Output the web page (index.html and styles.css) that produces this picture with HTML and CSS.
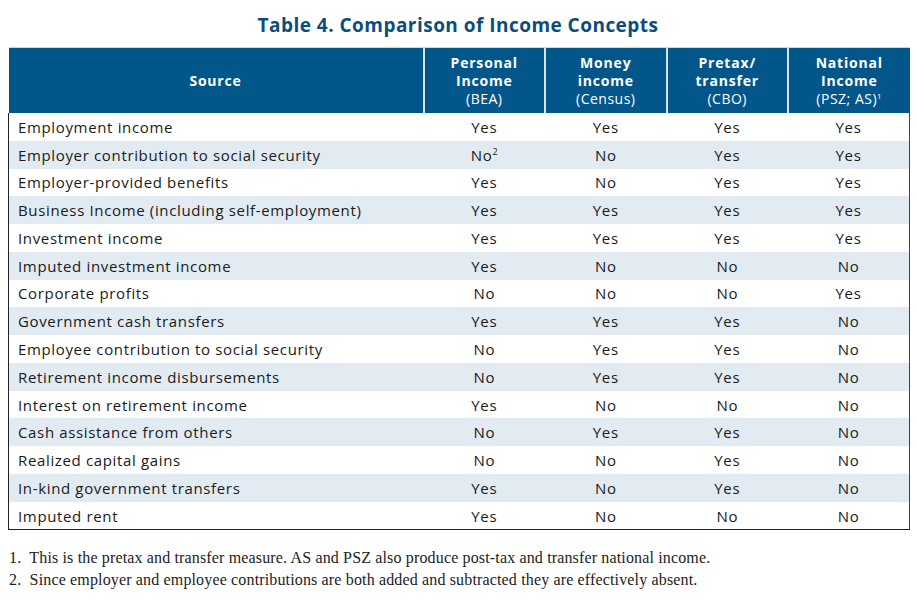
FILE: index.html
```html
<!DOCTYPE html>
<html>
<head>
<meta charset="utf-8">
<link rel="stylesheet" href="styles.css">
</head>
<body>
<h1 class="title">Table 4. Comparison of Income Concepts</h1>
<table class="tbl">
<colgroup><col class="c-src"><col class="c-val"><col class="c-val"><col class="c-val"><col class="c-val"></colgroup>
<thead>
<tr>
<th class="h-src">Source</th>
<th><b>Personal<br>Income</b><br><span class="sub">(BEA)</span></th>
<th><b>Money<br>income</b><br><span class="sub">(Census)</span></th>
<th><b>Pretax/<br>transfer</b><br><span class="sub">(CBO)</span></th>
<th class="last"><b>National<br>Income</b><br><span class="sub">(PSZ; AS)<sup>1</sup></span></th>
</tr>
</thead>
<tbody>
<tr><td>Employment income</td><td>Yes</td><td>Yes</td><td>Yes</td><td>Yes</td></tr>
<tr><td>Employer contribution to social security</td><td>No<sup>2</sup></td><td>No</td><td>Yes</td><td>Yes</td></tr>
<tr><td>Employer-provided benefits</td><td>Yes</td><td>No</td><td>Yes</td><td>Yes</td></tr>
<tr><td>Business Income (including self-employment)</td><td>Yes</td><td>Yes</td><td>Yes</td><td>Yes</td></tr>
<tr><td>Investment income</td><td>Yes</td><td>Yes</td><td>Yes</td><td>Yes</td></tr>
<tr><td>Imputed investment income</td><td>Yes</td><td>No</td><td>No</td><td>No</td></tr>
<tr><td>Corporate profits</td><td>No</td><td>No</td><td>No</td><td>Yes</td></tr>
<tr><td>Government cash transfers</td><td>Yes</td><td>Yes</td><td>Yes</td><td>No</td></tr>
<tr><td>Employee contribution to social security</td><td>No</td><td>Yes</td><td>Yes</td><td>No</td></tr>
<tr><td>Retirement income disbursements</td><td>No</td><td>Yes</td><td>Yes</td><td>No</td></tr>
<tr><td>Interest on retirement income</td><td>Yes</td><td>No</td><td>No</td><td>No</td></tr>
<tr><td>Cash assistance from others</td><td>No</td><td>Yes</td><td>Yes</td><td>No</td></tr>
<tr><td>Realized capital gains</td><td>No</td><td>No</td><td>Yes</td><td>No</td></tr>
<tr><td>In-kind government transfers</td><td>Yes</td><td>No</td><td>Yes</td><td>No</td></tr>
<tr><td>Imputed rent</td><td>Yes</td><td>No</td><td>No</td><td>No</td></tr>
</tbody>
</table>
<ol class="notes">
<li>This is the pretax and transfer measure. AS and PSZ also produce post-tax and transfer national income.</li>
<li>Since employer and employee contributions are both added and subtracted they are effectively absent.</li>
</ol>
</body>
</html>
```
FILE: styles.css
```css
html, body { margin: 0; padding: 0; background: #fff; }
body { padding: 0 8px; font-family: "Open Sans", sans-serif; }
.title {
  margin: 13px 0 0 0;
  height: 34px;
  text-align: center;
  font-family: "Open Sans", sans-serif;
  font-weight: 700;
  font-size: 19px;
  line-height: 24px;
  letter-spacing: 0.47px;
  color: #0b4d80;
}
.tbl {
  width: 901px;
  border-collapse: collapse;
  table-layout: fixed;
}
.c-src { width: 415px; }
.c-val { width: 121.5px; }
thead th {
  background: #02568a;
  color: #fff;
  height: 64px;
  padding: 1px 0 0 0;
  font-size: 14px;
  line-height: 18px;
  font-weight: 400;
  text-align: center;
  border-left: 2px solid #d9e3ec;
  border-top: 1px solid #c8d6e2;
}
thead th:first-child { border-left: none; }
thead th b { font-weight: 700; letter-spacing: 0.8px; }
.h-src { font-weight: 700; letter-spacing: 0.8px; }
.sub { font-weight: 400; letter-spacing: 0.5px; }
thead sup { font-size: 8px; line-height: 0; vertical-align: 5px; }
tbody td {
  height: 27.78px;
  padding: 0;
  font-size: 15px;
  letter-spacing: 0.65px;
  color: #1a1a1a;
  text-align: center;
}
tbody td:first-child { text-align: left; padding-left: 9px; border-left: 1px solid #222; }
tbody td:last-child { border-right: 1px solid #444; }
tbody tr:nth-child(even) td { background: #e2ebf2; }
tbody tr:last-child td { border-bottom: 1px solid #222; }
tbody sup { font-size: 9px; line-height: 0; vertical-align: 6px; letter-spacing: 0; }
.notes {
  margin: 17px 0 0 0;
  padding: 0 0 0 1px;
  list-style: none;
  counter-reset: n;
  font-family: "Liberation Serif", serif;
  font-size: 16px;
  letter-spacing: 0.15px;
  color: #222;
}
.notes li { counter-increment: n; line-height: 22px; }
.notes li::before { content: counter(n) ".  "; white-space: pre; }
```
